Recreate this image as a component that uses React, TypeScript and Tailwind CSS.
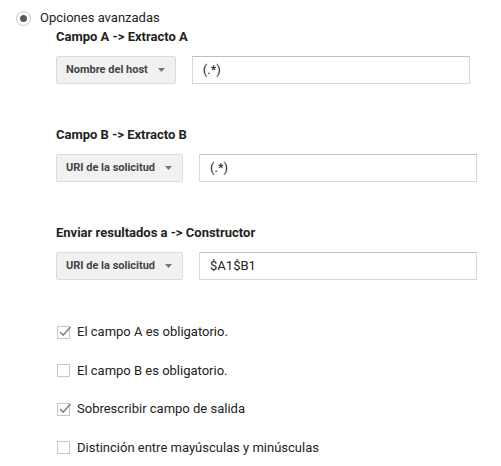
const font = { fontFamily: "Roboto, 'Liberation Sans', sans-serif" };

function Select({ label }: { label: string }) {
  return (
    <div className="flex h-[28px] items-center rounded-[2px] border border-[#dcdcdc] bg-[#f1f1f1] pl-[9px] pr-[10px]">
      <span className="text-[11px] font-bold text-[#444]">{label}</span>
      <svg className="ml-[10px]" width="7" height="4" viewBox="0 0 7 4">
        <path d="M0 0h7L3.5 4z" fill="#777" />
      </svg>
    </div>
  );
}

function Field({ value }: { value: string }) {
  return (
    <div className="flex h-[28px] w-[278px] items-center border border-[#d9d9d9] border-t-[#c0c0c0] bg-white px-[10px] text-[13px] text-[#222]">
      {value}
    </div>
  );
}

function Group({ title, select, value, first }: { title: string; select: string; value: string; first?: boolean }) {
  return (
    <div className={first ? "mt-[3px]" : "mt-[43px]"}>
      <div className="h-[16px] text-[13px] leading-[16px] font-bold text-[#222]">{title}</div>
      <div className="mt-[11px] flex gap-[16px]">
        <Select label={select} />
        <Field value={value} />
      </div>
    </div>
  );
}

function Check({ label, checked }: { label: string; checked?: boolean }) {
  return (
    <div className="flex h-[16px] items-center gap-[7px]">
      <div className="relative h-[13px] w-[13px] border border-[#c6c6c6] bg-white">
        {checked && (
          <svg width="14" height="14" viewBox="0 0 14 14" className="absolute -top-[3px] left-[0px]">
            <path d="M2 8l3.2 3.2L12.5 3" fill="none" stroke="#808080" strokeWidth="1.6" />
          </svg>
        )}
      </div>
      <span className="text-[13px] text-[#222]">{label}</span>
    </div>
  );
}

export default function App() {
  return (
    <div className="h-[466px] w-[501px] bg-white pt-[10px]" style={font}>
      <div className="flex h-[16px] items-center pl-[16px]">
        <div className="flex h-[15px] w-[15px] items-center justify-center rounded-full border border-[#c8c8c8] bg-white">
          <div className="h-[7px] w-[7px] rounded-full bg-[#5a5a5a]" />
        </div>
        <span className="ml-[9px] text-[13px] text-[#222]">Opciones avanzadas</span>
      </div>

      <div className="pl-[56px]">
        <Group first title="Campo A -> Extracto A" select="Nombre del host" value="(.*)" />
        <Group title="Campo B -> Extracto B" select="URI de la solicitud" value="(.*)" />
        <Group title="Enviar resultados a -> Constructor" select="URI de la solicitud" value="$A1$B1" />
      </div>

      <div className="mt-[44px] flex flex-col gap-[22.5px] pl-[57px]">
        <Check checked label="El campo A es obligatorio." />
        <Check label="El campo B es obligatorio." />
        <Check checked label="Sobrescribir campo de salida" />
        <Check label="Distinción entre mayúsculas y minúsculas" />
      </div>
    </div>
  );
}
